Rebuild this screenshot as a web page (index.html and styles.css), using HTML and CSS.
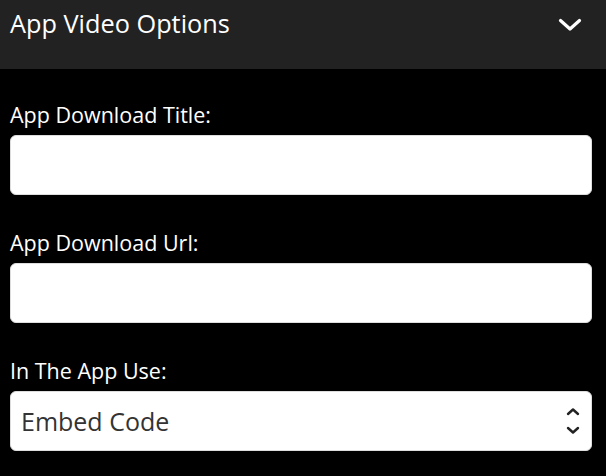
FILE: index.html
```html
<!DOCTYPE html>
<html lang="en">

<head>
    <meta charset="UTF-8">
    <title>App Video Options</title>
    <link rel="stylesheet" href="styles.css">
</head>

<body>
    <div class="panel">
        <div class="panel-head">
            <h2>App Video Options</h2>
            <svg class="toggle" width="24" height="14" viewBox="0 0 24 14">
                <path d="M2.5 2.5 L12 11 L21.5 2.5" fill="none" stroke="#fff" stroke-width="3.2" stroke-linecap="round" stroke-linejoin="round" />
            </svg>
        </div>
        <div class="panel-body">
            <div class="field">
                <label for="title">App Download Title:</label>
                <input type="text" id="title">
            </div>
            <div class="field">
                <label for="url">App Download Url:</label>
                <input type="text" id="url">
            </div>
            <div class="field">
                <label for="use">In The App Use:</label>
                <div class="select" id="use">
                    <span>Embed Code</span>
                    <svg width="14" height="28" viewBox="0 0 14 28">
                        <path d="M2 7 L7 2.5 L12 7" fill="none" stroke="#222" stroke-width="2.4" stroke-linecap="round" stroke-linejoin="round" />
                        <path d="M2 21 L7 25.5 L12 21" fill="none" stroke="#222" stroke-width="2.4" stroke-linecap="round" stroke-linejoin="round" />
                    </svg>
                </div>
            </div>
        </div>
    </div>
</body>

</html>
```

FILE: styles.css
```css
body {
    margin: 0;
    background: #000;
    font-family: "Open Sans", "Noto Sans", sans-serif;
    color: #fff;
}

.panel-head {
    display: flex;
    justify-content: space-between;
    align-items: flex-start;
    box-sizing: border-box;
    height: 69px;
    padding: 6px 24px 0 10px;
    background: #222;
}

.panel-head h2 {
    margin: 0;
    font-size: 25.3px;
    font-weight: normal;
    line-height: 34px;
}

.panel-head .toggle {
    margin-top: 12px;
}

.panel-body {
    display: flex;
    flex-direction: column;
    gap: 33px;
    padding: 31px 14px 0 10px;
}

.field label {
    display: block;
    margin-bottom: 6px;
    font-size: 21.5px;
    line-height: 29px;
}

.field input,
.field .select {
    display: block;
    box-sizing: border-box;
    width: 100%;
    height: 60px;
    border: 1px solid #ddd;
    border-radius: 6px;
    background: #fff;
}

.field .select {
    display: flex;
    justify-content: space-between;
    align-items: center;
    padding: 0 11px 0 10px;
    color: #333;
    font-size: 25px;
}
```
